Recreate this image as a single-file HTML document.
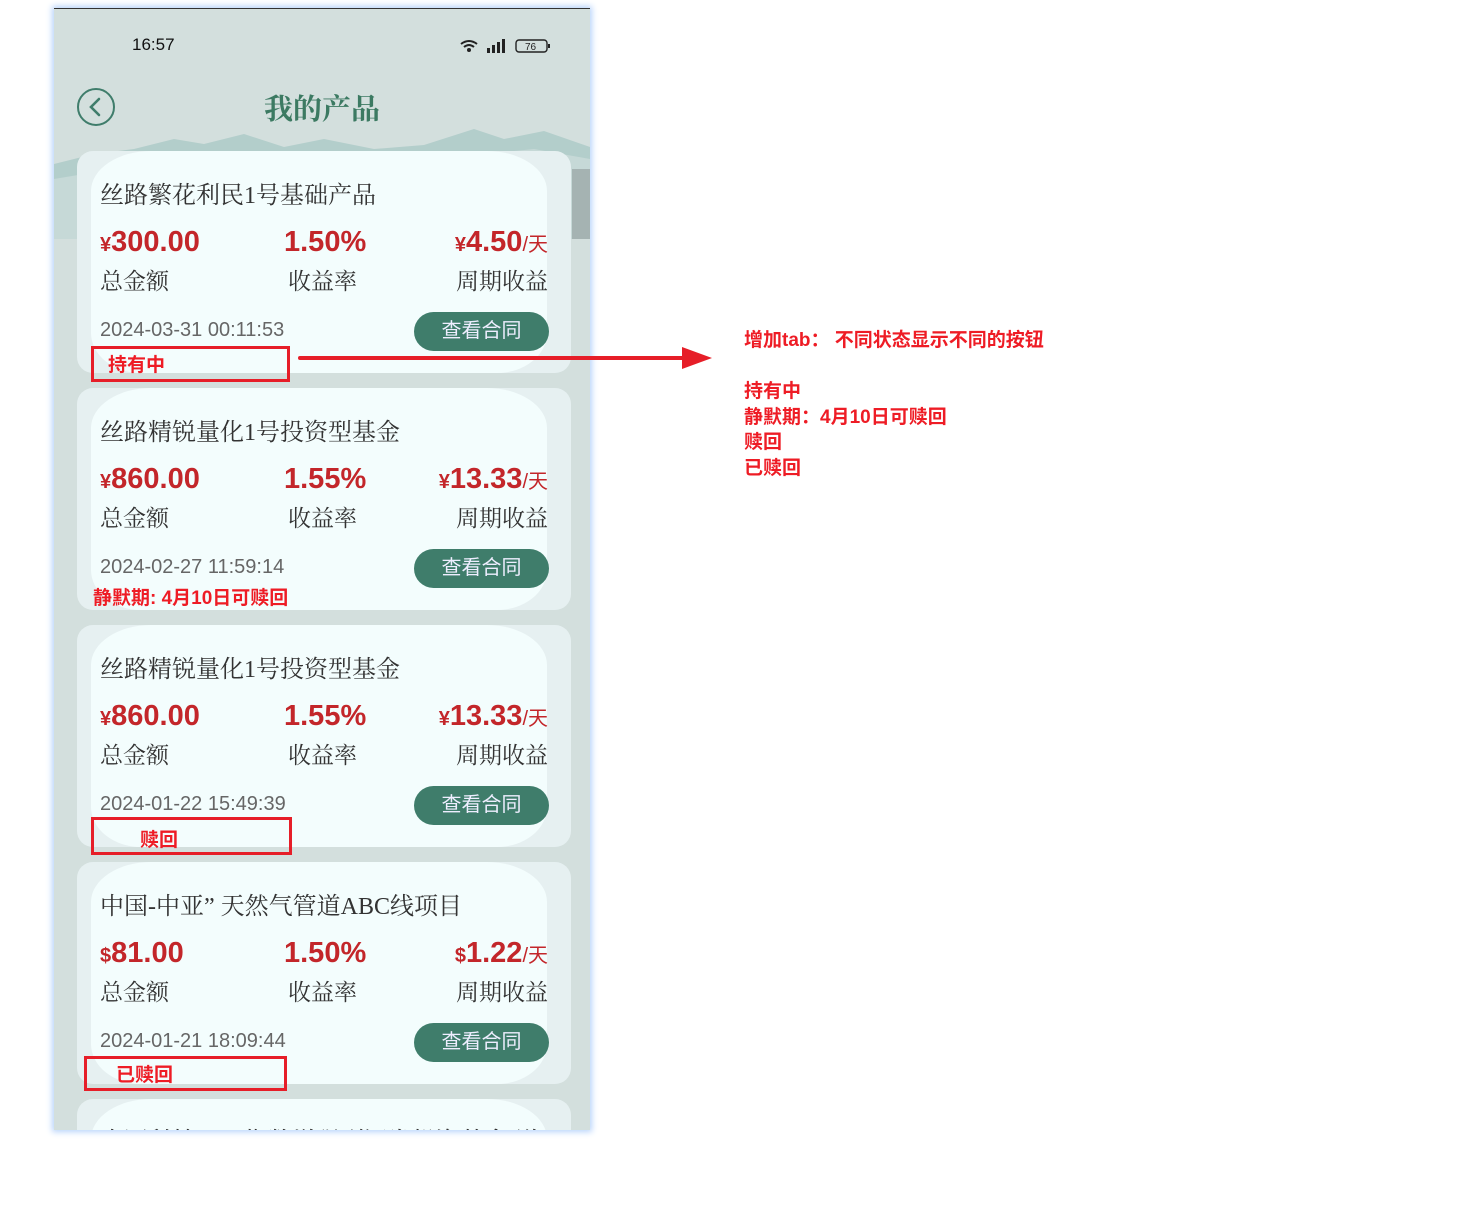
<!DOCTYPE html>
<html><head><meta charset="utf-8"><style>
*{margin:0;padding:0;box-sizing:border-box}
html,body{width:1483px;height:1229px;overflow:hidden}
body{background:#fff;position:relative;font-family:"Liberation Sans","Noto Sans CJK SC",sans-serif}
.phone{position:absolute;left:54px;top:8px;width:536px;height:1122px;background:#d3dfdd;overflow:hidden;border-top:1px solid #333;box-shadow:0 0 6px 2px #b8d4fb}
.abs{position:absolute}
.card{position:absolute;left:23px;width:494px;height:222px;border-radius:16px;background:#e6f0f1;overflow:hidden}
.card .in{position:absolute;left:14px;top:0;width:456px;height:222px;background:#f3fdfd;border-radius:60px 60px 50px 50px/40px 40px 40px 40px}
.t{position:absolute;left:23px;top:24px;font-family:"Liberation Serif","Noto Serif CJK SC",serif;font-size:24px;color:#333;white-space:nowrap}
.v{position:absolute;top:74px;font-size:29px;font-weight:bold;color:#c3262a;white-space:nowrap;line-height:34px}
.v small{font-size:20px;font-weight:bold}
.v sub{font-size:20px;vertical-align:baseline;font-weight:normal}
.l{position:absolute;top:112px;font-family:"Liberation Serif","Noto Serif CJK SC",serif;font-size:23px;color:#333;white-space:nowrap}
.d{position:absolute;left:23px;top:168px;font-size:20px;color:#666}
.b{position:absolute;left:337px;top:161px;width:135px;height:39px;border-radius:20px;background:#3f7d6b;color:#eef;font-size:20px;text-align:center;line-height:39px}
.red{color:#ee1c25;font-weight:bold;font-family:"Liberation Sans","Noto Sans CJK SC",sans-serif}
.box{position:absolute;border:3px solid #e61e28}
</style></head><body>
<div class="phone">
 <svg class="abs" style="left:0;top:110px" width="536" height="120" viewBox="0 0 536 120"><path d="M0 45 L40 35 L80 30 L120 20 L150 25 L190 15 L230 28 L270 20 L320 30 L370 26 L420 10 L450 20 L490 12 L536 28 L536 120 L0 120Z" fill="#b3cecb"/><path d="M0 60 L60 50 L120 45 L200 40 L300 45 L400 38 L480 30 L536 40 L536 120 L0 120Z" fill="#c6d9d7"/><rect x="518" y="50" width="18" height="70" fill="#a5b3b2"/></svg>
 <div class="abs" style="left:78px;top:26px;font-size:17px;color:#111">16:57</div>
 <svg class="abs" style="left:404px;top:29px" width="95" height="16"><path d="M3 6 Q11 0 19 6" stroke="#222" stroke-width="2" fill="none"/><path d="M6 9 Q11 5 16 9" stroke="#222" stroke-width="2" fill="none"/><circle cx="11" cy="12" r="2" fill="#222"/><rect x="29" y="10" width="3" height="5" fill="#222"/><rect x="34" y="7" width="3" height="8" fill="#222"/><rect x="39" y="4" width="3" height="11" fill="#222"/><rect x="44" y="1" width="3" height="14" fill="#222"/><rect x="58" y="2" width="31" height="12" rx="3" stroke="#222" fill="none" stroke-width="1.4"/><rect x="90" y="6" width="2" height="4" fill="#222"/><text x="67" y="12" font-size="10" fill="#222" font-family="Liberation Sans">76</text></svg>
 <svg class="abs" style="left:22px;top:78px" width="40" height="40"><circle cx="20" cy="20" r="18" stroke="#3f7d6b" stroke-width="2" fill="none"/><path d="M23 12 L15 20 L23 28" stroke="#3f7d6b" stroke-width="2.6" fill="none" stroke-linecap="round"/></svg>
 <div class="abs" style="left:210px;top:78px;font-family:'Liberation Serif','Noto Serif CJK SC',serif;font-size:29px;font-weight:bold;color:#3c7a62">我的产品</div>

 <div class="card" style="top:142px"><div class="in"></div>
  <div class="t">丝路繁花利民1号基础产品</div>
  <div class="v" style="left:23px"><small>¥</small>300.00</div><div class="v" style="left:207px">1.50%</div><div class="v" style="right:23px"><small>¥</small>4.50<sub>/天</sub></div>
  <div class="l" style="left:23px">总金额</div><div class="l" style="left:211px">收益率</div><div class="l" style="right:23px">周期收益</div>
  <div class="d">2024-03-31 00:11:53</div><div class="b">查看合同</div></div>
 <div class="card" style="top:379px"><div class="in"></div>
  <div class="t">丝路精锐量化1号投资型基金</div>
  <div class="v" style="left:23px"><small>¥</small>860.00</div><div class="v" style="left:207px">1.55%</div><div class="v" style="right:23px"><small>¥</small>13.33<sub>/天</sub></div>
  <div class="l" style="left:23px">总金额</div><div class="l" style="left:211px">收益率</div><div class="l" style="right:23px">周期收益</div>
  <div class="d">2024-02-27 11:59:14</div><div class="b">查看合同</div></div>
 <div class="card" style="top:616px"><div class="in"></div>
  <div class="t">丝路精锐量化1号投资型基金</div>
  <div class="v" style="left:23px"><small>¥</small>860.00</div><div class="v" style="left:207px">1.55%</div><div class="v" style="right:23px"><small>¥</small>13.33<sub>/天</sub></div>
  <div class="l" style="left:23px">总金额</div><div class="l" style="left:211px">收益率</div><div class="l" style="right:23px">周期收益</div>
  <div class="d">2024-01-22 15:49:39</div><div class="b">查看合同</div></div>
 <div class="card" style="top:853px"><div class="in"></div>
  <div class="t">中国-中亚”&nbsp;天然气管道ABC线项目</div>
  <div class="v" style="left:23px"><small>$</small>81.00</div><div class="v" style="left:207px">1.50%</div><div class="v" style="right:23px"><small>$</small>1.22<sub>/天</sub></div>
  <div class="l" style="left:23px">总金额</div><div class="l" style="left:211px">收益率</div><div class="l" style="right:23px">周期收益</div>
  <div class="d">2024-01-21 18:09:44</div><div class="b">查看合同</div></div>
 <div class="card" style="top:1090px"><div class="in"></div>
  <div class="t" style="top:22px">中国科技——指数增强型证券投资基金·道</div></div>
</div>

<div class="box" style="left:91px;top:346px;width:199px;height:36px"></div>
<div class="abs red" style="left:108px;top:350px;font-size:19px">持有中</div>
<div class="abs red" style="left:93px;top:583px;font-size:19px">静默期: 4月10日可赎回</div>
<div class="box" style="left:91px;top:817px;width:201px;height:38px"></div>
<div class="abs red" style="left:140px;top:825px;font-size:19px">赎回</div>
<div class="box" style="left:84px;top:1056px;width:203px;height:35px"></div>
<div class="abs red" style="left:116px;top:1060px;font-size:19px">已赎回</div>

<svg class="abs" style="left:296px;top:344px" width="420" height="30"><line x1="4" y1="14" x2="392" y2="14" stroke="#e61e28" stroke-width="4" stroke-linecap="round"/><path d="M386 3 L416 14 L386 25Z" fill="#e61e28"/></svg>
<div class="abs red" style="left:744px;top:328px;font-size:19px;line-height:25.5px;white-space:nowrap">增加tab：&nbsp;不同状态显示不同的按钮<br><br>持有中<br>静默期：4月10日可赎回<br>赎回<br>已赎回</div>
</body></html>
